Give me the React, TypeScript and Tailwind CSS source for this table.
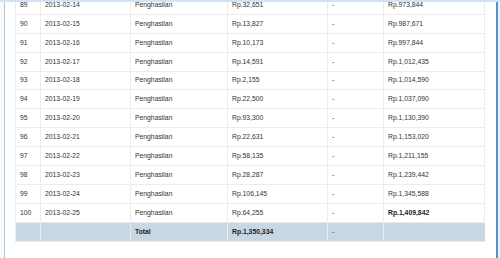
import React from "react";

const rows: [string, string, string, string][] = [
  ["89", "2013-02-14", "Rp.32,651", "Rp.973,844"],
  ["90", "2013-02-15", "Rp.13,827", "Rp.987,671"],
  ["91", "2013-02-16", "Rp.10,173", "Rp.997,844"],
  ["92", "2013-02-17", "Rp.14,591", "Rp.1,012,435"],
  ["93", "2013-02-18", "Rp.2,155", "Rp.1,014,590"],
  ["94", "2013-02-19", "Rp.22,500", "Rp.1,037,090"],
  ["95", "2013-02-20", "Rp.93,300", "Rp.1,130,390"],
  ["96", "2013-02-21", "Rp.22,631", "Rp.1,153,020"],
  ["97", "2013-02-22", "Rp.58,135", "Rp.1,211,155"],
  ["98", "2013-02-23", "Rp.28,287", "Rp.1,239,442"],
  ["99", "2013-02-24", "Rp.106,145", "Rp.1,345,588"],
  ["100", "2013-02-25", "Rp.64,255", "Rp.1,409,842"],
];

const cell =
  "h-[18.9px] flex items-center pl-[4px] border-l border-b border-[#ececec] whitespace-nowrap";

export default function App() {
  return (
    <div
      className="w-[500px] h-[258px] flex flex-col bg-white overflow-hidden text-[#333333]"
      style={{ fontFamily: '"Liberation Sans", Arial, sans-serif' }}
    >
      <div className="h-[2px] shrink-0 bg-[#d3e3f2]" />
      <div className="flex flex-1 min-h-0">
        <div className="w-[4px] shrink-0 bg-[#fafafa]" />
        <div className="w-[1px] shrink-0 bg-[#a6c8e6]" />
        <div className="flex-1 min-w-0 overflow-hidden pl-[10px] pr-[11px]">
          <div className="mt-[-6px] grid grid-cols-[25px_90px_97px_100px_56px_102px] text-[6.8px] border-r border-[#ececec]">
            {rows.map((r, i) => (
              <React.Fragment key={r[0]}>
                <div className={cell}>{r[0]}</div>
                <div className={cell}>{r[1]}</div>
                <div className={cell}>Penghasilan</div>
                <div className={cell}>{r[2]}</div>
                <div className={cell}>-</div>
                <div className={`${cell} ${i === rows.length - 1 ? "font-bold text-[#222]" : ""}`}>
                  {r[3]}
                </div>
              </React.Fragment>
            ))}
            <div className={`${cell} bg-[#c7d7e4]`} />
            <div className={`${cell} bg-[#c7d7e4]`} />
            <div className={`${cell} bg-[#c7d7e4] font-bold text-[#222]`}>Total</div>
            <div className={`${cell} bg-[#c7d7e4] font-bold text-[#222]`}>Rp.1,350,334</div>
            <div className={`${cell} bg-[#c7d7e4]`}>-</div>
            <div className={`${cell} bg-[#c7d7e4]`} />
          </div>
        </div>
        <div className="w-[2px] shrink-0 bg-[#5592c9]" />
        <div className="w-[2px] shrink-0 bg-[#e9f1f8]" />
      </div>
    </div>
  );
}
